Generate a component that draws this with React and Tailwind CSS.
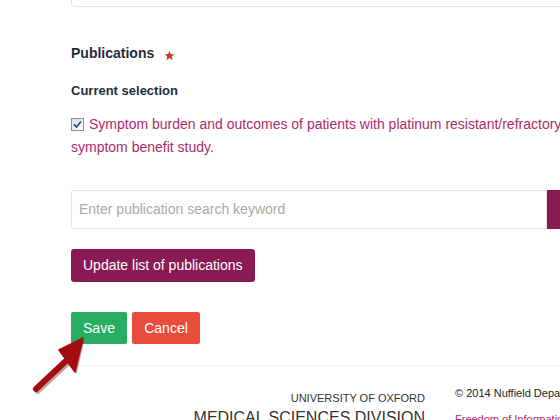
import React from "react";

function Checkbox() {
  return (
    <span className="inline-flex items-center justify-center w-[13px] h-[13px] border border-[#8e8f8f] bg-gradient-to-br from-[#dcdcdc] to-[#ffffff] shrink-0">
      <svg width="9" height="9" viewBox="0 0 9 9">
        <path d="M1 4.5 L3.5 7 L8 1.5" fill="none" stroke="#2b4aa0" strokeWidth="1.8" />
      </svg>
    </span>
  );
}

function Arrow() {
  return (
    <svg className="absolute left-0 top-0" width="120" height="420" viewBox="0 0 120 420">
      <g transform="translate(1.5,2)" opacity="0.35">
        <line x1="36" y1="389" x2="68" y2="359" stroke="#400" strokeWidth="6" strokeLinecap="round" />
        <polygon points="83,338 59,350 75,372" fill="#400" />
      </g>
      <line x1="36" y1="389" x2="68" y2="359" stroke="#a30d12" strokeWidth="6" strokeLinecap="round" />
      <polygon points="83,338 59,350 75,372" fill="#a30d12" stroke="#a30d12" strokeWidth="1.5" strokeLinejoin="round" />
    </svg>
  );
}

export default function App() {
  return (
    <div className="relative w-[560px] h-[420px] overflow-hidden bg-white font-['Liberation_Sans',Arial,sans-serif] text-[#333]">
      <div className="pl-[71px]">
        <div className="w-[700px] h-[7px] border border-t-0 border-[#e2e2e2] rounded-b-[4px]" />

        <div className="mt-[36px] flex items-center h-[20px] text-[14px] leading-[20px] font-bold text-[#1f2e3d]">
          Publications
          <svg className="ml-[10px] mt-[4px]" width="11" height="11" viewBox="0 0 24 24">
            <path d="M12 1.5 L15 9 L23 9.3 L16.8 14.3 L19 22.2 L12 17.6 L5 22.2 L7.2 14.3 L1 9.3 L9 9 Z" fill="#c0392b" />
          </svg>
        </div>

        <div className="mt-[19px] h-[18px] text-[13px] leading-[18px] font-bold text-[#1f2e3d]">
          Current selection
        </div>

        <div className="mt-[13px] text-[14px] leading-[23px] text-[#ad2b6b] whitespace-nowrap">
          <div className="flex items-center gap-[5px]">
            <Checkbox />
            <span>
              Symptom burden and outcomes of patients with platinum resistant/refractory recurrent ovarian cancer
            </span>
          </div>
          <div>symptom benefit study.</div>
        </div>

        <div className="mt-[31px] flex h-[39px] w-[700px]">
          <div className="w-[476px] h-full border border-[#e3e3e3] rounded-l-[3px] flex items-center pl-[7px] text-[14px] text-[#aaa]">
            Enter publication search keyword
          </div>
          <div className="w-[120px] h-full bg-[#8a1a53]" />
        </div>

        <div className="mt-[20px]">
          <button className="h-[33px] px-[12px] rounded-[3px] bg-[#8a1a53] text-white text-[14px]">
            Update list of publications
          </button>
        </div>

        <div className="mt-[30px] flex gap-[5px]">
          <button className="h-[32px] w-[56px] rounded-[2px] bg-[#27ae60] text-white text-[14px]">Save</button>
          <button className="h-[32px] w-[68px] rounded-[2px] bg-[#e74c3c] text-white text-[14px]">Cancel</button>
        </div>

        <div className="mt-[21px] w-[700px] border-t border-[#eeeeee]" />

        <div className="mt-[26px] flex gap-[30px] w-[800px]">
          <div className="w-[354px] shrink-0 text-right text-[#333]">
            <div className="text-[11px] leading-[13px]">UNIVERSITY OF OXFORD</div>
            <div className="mt-[3px] text-[16px] leading-[20px] whitespace-nowrap">MEDICAL SCIENCES DIVISION</div>
          </div>
          <div className="-mt-[5px] text-[11px] leading-[13px] whitespace-nowrap">
            <div className="text-[#222]">© 2014 Nuffield Department of Medicine</div>
            <div className="mt-[13px] text-[#ad2b6b]">Freedom of Information</div>
          </div>
        </div>
      </div>
      <Arrow />
    </div>
  );
}
